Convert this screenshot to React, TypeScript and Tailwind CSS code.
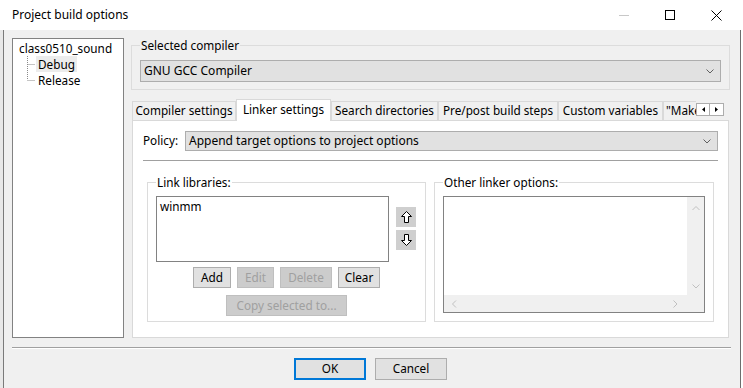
import React from 'react';

const Btn: React.FC<{ label: string; disabled?: boolean; w: string }> = ({ label, disabled, w }) => (
  <div
    className={`${w} h-[21px] flex items-center justify-center border text-[11.75px] ${
      disabled ? 'bg-[#cccccc] border-[#bfbfbf] text-[#a0a0a0]' : 'bg-[#e1e1e1] border-[#adadad] text-black'
    }`}
  >
    {label}
  </div>
);

const Chevron: React.FC<{ dir: 'up' | 'down' | 'left' | 'right'; color?: string }> = ({ dir, color = '#606060' }) => {
  const pts = {
    down: '0.5,0.5 4,4 7.5,0.5',
    up: '0.5,4 4,0.5 7.5,4',
    left: '4,0.5 0.5,4 4,7.5',
    right: '0.5,0.5 4,4 0.5,7.5',
  }[dir];
  const horiz = dir === 'left' || dir === 'right';
  return (
    <svg width={horiz ? 5 : 8} height={horiz ? 8 : 5} viewBox={horiz ? '0 0 5 8' : '0 0 8 5'}>
      <polyline points={pts} fill="none" stroke={color} strokeWidth="1" />
    </svg>
  );
};

const Select: React.FC<{ text: string; className: string }> = ({ text, className }) => (
  <div className={`flex items-center justify-between bg-[#e1e1e1] border border-[#adadad] pl-[3px] pr-[6px] ${className}`}>
    <span className="text-[12px]">{text}</span>
    <Chevron dir="down" />
  </div>
);

const ArrowBtn: React.FC<{ up?: boolean }> = ({ up }) => (
  <div className="w-[20px] h-[20px] bg-[#cfcfcf] flex items-center justify-center">
    <svg width="11" height="12" viewBox="0 0 11 12" className={up ? '' : 'rotate-180'}>
      <polygon points="5.5,0.5 10.5,5.5 7.5,5.5 7.5,11.5 3.5,11.5 3.5,5.5 0.5,5.5" fill="white" stroke="black" strokeWidth="1" />
    </svg>
  </div>
);

const tabs = [
  { label: 'Compiler settings', w: 'w-[104px]' },
  { label: 'Linker settings', w: 'w-[95px]', active: true },
  { label: 'Search directories', w: 'w-[107px]' },
  { label: 'Pre/post build steps', w: 'w-[120px]' },
  { label: 'Custom variables', w: 'w-[105px]' },
  { label: '"Make" commands', w: 'w-[110px]' },
];

const App: React.FC = () => {
  return (
    <div className="w-[743px] h-[388px] overflow-hidden bg-white font-['Noto_Sans',sans-serif] text-black select-none">
      {/* Title bar */}
      <div className="h-[30px] flex items-center justify-between pl-[12px]">
        <span className="text-[12px]">Project build options</span>
        <div className="flex items-center h-full">
          <div className="w-[46px] h-full flex items-center justify-center ml-[2px]">
            <div className="w-[10px] h-px bg-[#c8c8c8]" />
          </div>
          <div className="w-[46px] h-full flex items-center justify-center">
            <div className="w-[10px] h-[10px] border border-black" />
          </div>
          <div className="w-[46px] h-full flex items-center justify-center mr-[4px]">
            <svg width="11" height="11" viewBox="0 0 11 11">
              <path d="M0.5 0.5 L10.5 10.5 M10.5 0.5 L0.5 10.5" stroke="black" strokeWidth="1" />
            </svg>
          </div>
        </div>
      </div>

      {/* Window body */}
      <div className="flex h-[358px]">
        <div className="w-[3px] bg-[#e8e8e8]" />
        <div className="w-px bg-[#7a7a7a]" />

        <div className="flex-1 bg-[#f0f0f0] flex flex-col">
          <div className="flex items-start pl-[8px] pt-[7px]">
            {/* Target tree */}
            <div className="mt-px w-[112px] h-[300px] bg-white border border-[#828282] pl-[6px] pt-[1px] text-[11.75px] leading-[16px]">
              <div>class0510_sound</div>
              <div className="flex items-center">
                <svg width="17" height="16" viewBox="0 0 17 16">
                  <path d="M8.5 0 V16 M8.5 8.5 H16" stroke="#8a8a8a" strokeWidth="1" strokeDasharray="1 1" />
                </svg>
                <span className="bg-[#ececec] px-[2px]">Debug</span>
              </div>
              <div className="flex items-center">
                <svg width="17" height="16" viewBox="0 0 17 16">
                  <path d="M8.5 0 V8 M8.5 8.5 H16" stroke="#8a8a8a" strokeWidth="1" strokeDasharray="1 1" />
                </svg>
                <span className="px-[2px]">Release</span>
              </div>
            </div>

            {/* Right column */}
            <div className="ml-[7px] w-[599px] flex flex-col">
              <fieldset className="border border-[#dcdcdc] px-[8px] pt-[7px] pb-[7px]">
                <legend className="text-[11.75px] leading-[16px] px-px">Selected compiler</legend>
                <Select text="GNU GCC Compiler" className="h-[22px]" />
              </fieldset>

              {/* Tabs */}
              <div className="mt-[9px] ml-px w-[597px] flex items-end h-[21px] relative z-10">
                <div className="w-[564px] flex items-end overflow-hidden h-[22px] -mb-px">
                  {tabs.map((t) =>
                    t.active ? (
                      <div
                        key={t.label}
                        className={`${t.w} shrink-0 h-[22px] bg-white border border-b-0 border-[#d9d9d9] flex items-center justify-center pb-[2px] text-[11.75px] whitespace-nowrap`}
                      >
                        {t.label}
                      </div>
                    ) : (
                      <div
                        key={t.label}
                        className={`${t.w} shrink-0 h-[19px] mb-px bg-[#f0f0f0] border border-b-0 border-[#d9d9d9] flex items-center justify-center text-[11.75px] whitespace-nowrap`}
                      >
                        {t.label}
                      </div>
                    )
                  )}
                </div>
                <div className="flex mb-[4px]">
                  <div className="w-[14px] h-[13px] bg-white border border-[#adadad] flex items-center justify-center">
                    <svg width="3" height="5" viewBox="0 0 3 5"><polygon points="3,0 0,2.5 3,5" fill="black" /></svg>
                  </div>
                  <div className="w-[14px] h-[13px] bg-white border border-l-0 border-[#adadad] flex items-center justify-center">
                    <svg width="3" height="5" viewBox="0 0 3 5"><polygon points="0,0 3,2.5 0,5" fill="black" /></svg>
                  </div>
                </div>
              </div>

              {/* Tab panel */}
              <div className="ml-px w-[597px] h-[218px] bg-white border border-[#d9d9d9] px-[10px] pt-[10px]">
                <div className="flex items-center">
                  <span className="w-[42px] text-[11.75px]">Policy:</span>
                  <Select text="Append target options to project options" className="flex-1 h-[20px]" />
                </div>
                <div className="mt-[9px] border-t border-[#a0a0a0] border-b border-b-white" />

                <div className="mt-[12px] px-[4px] flex gap-[8px]">
                  <fieldset className="w-[280px] h-[148px] border border-[#dcdcdc] px-[8px] pt-[6px]">
                    <legend className="text-[11.75px] leading-[16px] px-px">Link libraries:</legend>
                    <div className="flex">
                      <div className="w-[233px] h-[66px] border border-[#828282] bg-white pl-[3px] text-[11.75px] leading-[16px] pt-px">
                        winmm
                      </div>
                      <div className="ml-[7px] mt-[11px] flex flex-col gap-[3px]">
                        <ArrowBtn up />
                        <ArrowBtn />
                      </div>
                    </div>
                    <div className="mt-[5px] flex justify-center gap-[6px] -mx-[8px]">
                      <Btn label="Add" w="w-[38px]" />
                      <Btn label="Edit" w="w-[37px]" disabled />
                      <Btn label="Delete" w="w-[52px]" disabled />
                      <Btn label="Clear" w="w-[42px]" />
                    </div>
                    <div className="mt-[7px] flex justify-center -mx-[8px]">
                      <Btn label="Copy selected to..." w="w-[121px]" disabled />
                    </div>
                  </fieldset>

                  <fieldset className="w-[280px] h-[148px] border border-[#dcdcdc] px-[8px] pt-[6px]">
                    <legend className="text-[11.75px] leading-[16px] px-px">Other linker options:</legend>
                    <div className="w-[262px] h-[117px] border border-[#828282] bg-white flex flex-col">
                      <div className="flex flex-1">
                        <div className="flex-1" />
                        <div className="w-[17px] bg-[#f0f0f0] flex flex-col items-center justify-between pt-[9px] pb-[6px]">
                          <Chevron dir="up" color="#c0c0c0" />
                          <Chevron dir="down" color="#c0c0c0" />
                        </div>
                      </div>
                      <div className="h-[17px] bg-[#f0f0f0] flex items-center justify-between pl-[8px] pr-[26px]">
                        <Chevron dir="left" color="#c0c0c0" />
                        <Chevron dir="right" color="#c0c0c0" />
                      </div>
                    </div>
                  </fieldset>
                </div>
              </div>
            </div>
          </div>

          {/* Bottom separator and buttons */}
          <div className="mt-[9px] ml-[8px] w-[719px] border-t border-[#a0a0a0] border-b border-b-white" />
          <div className="mt-[9px] flex justify-center gap-[9px] pr-[3px]">
            <div className="w-[72px] h-[22px] bg-[#e1e1e1] border-2 border-[#0078d7] flex items-center justify-center text-[11.75px]">
              OK
            </div>
            <div className="w-[72px] h-[22px] bg-[#e1e1e1] border border-[#adadad] flex items-center justify-center text-[11.75px]">
              Cancel
            </div>
          </div>
        </div>

        <div className="w-px bg-[#6e6e6e]" />
        <div className="w-[2px] bg-white" />
      </div>
    </div>
  );
};

export default App;
